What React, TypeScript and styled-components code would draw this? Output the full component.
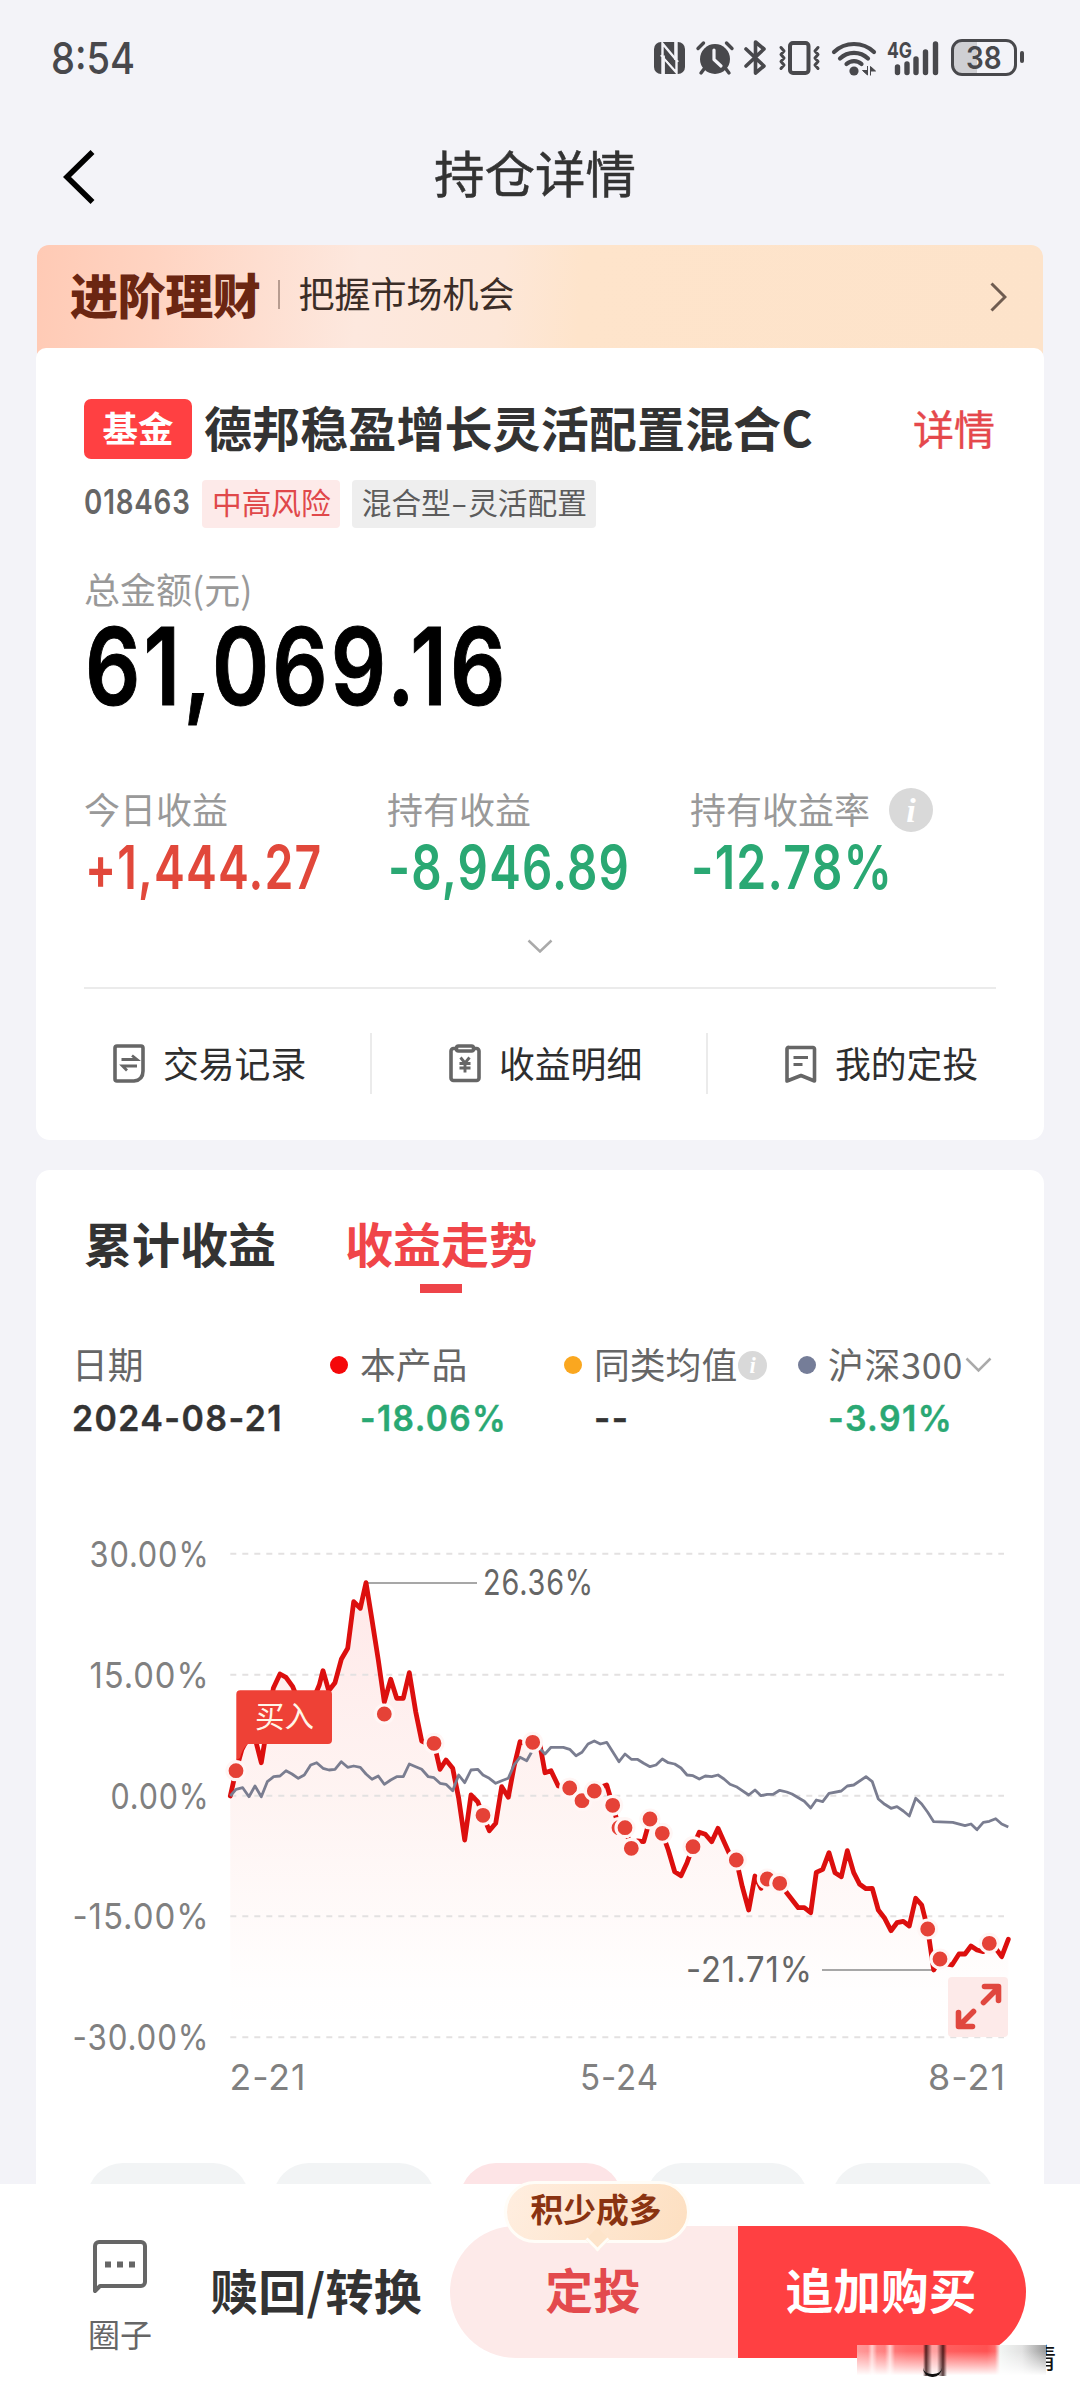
import React, { useLayoutEffect, useRef, useState } from "react";
import styled, { createGlobalStyle, css } from "styled-components";

const cjkFont = `"Noto Sans CJK SC", "Noto Sans", sans-serif`;
const numFont = `Inter, Roboto, "Noto Sans CJK SC", sans-serif`;

const Global = createGlobalStyle`
  * { box-sizing: border-box; }
  body { margin: 0; background: #f3f3f8; font-family: ${cjkFont}; }
`;

/* CJK glyphs sit low in their line box; this evens them out when centred. */
const centred = css`
  padding-bottom: 0.11em;
  white-space: nowrap;
`;

const Page = styled.div`
  width: 1080px;
  height: 2400px;
  overflow: hidden;
  display: flex;
  flex-direction: column;
  background: #f3f3f8;
`;

/* ---------- fitted numerals ---------- */
const FitBox = styled.span<{ $w: number }>`
  display: inline-block;
  flex: none;
  width: ${(p) => p.$w}px;
  white-space: nowrap;
  text-align: left;
`;
const FitInner = styled.span`
  display: inline-block;
  transform-origin: 0 50%;
`;
function Fit({ width, children }: { width: number; children: string }) {
  const ref = useRef<HTMLSpanElement>(null);
  const [k, setK] = useState(1);
  useLayoutEffect(() => {
    if (ref.current) setK(width / ref.current.offsetWidth);
  }, [width, children]);
  return (
    <FitBox $w={width}>
      <FitInner ref={ref} style={{ transform: `scaleX(${k})` }}>
        {children}
      </FitInner>
    </FitBox>
  );
}

/* ---------- status bar ---------- */
const StatusBar = styled.header`
  flex: none;
  height: 115px;
  padding: 0 56px 0 51px;
  display: flex;
  align-items: center;
  justify-content: space-between;
  color: #48484c;
`;
const Clock = styled.div`
  font: 500 44px/50px ${numFont};
`;
const StatusIcons = styled.div`
  display: flex;
  align-items: center;
`;
const StatusIcon = styled.svg<{ $gap?: number }>`
  display: block;
  overflow: visible;
  margin-left: ${(p) => p.$gap ?? 0}px;
`;
const Battery = styled.div`
  position: relative;
  margin: 0 7px 0 12px;
  width: 66px;
  height: 37px;
  border: 3px solid #48484c;
  border-radius: 11px;
  background: linear-gradient(90deg, #cfcfd3 0 38%, transparent 38%);
  font: 600 31px/31px ${numFont};
  text-align: center;
  &::after {
    content: "";
    position: absolute;
    right: -10px;
    top: 9px;
    width: 4px;
    height: 12px;
    border-radius: 2px;
    background: #48484c;
  }
`;

function StatusGlyphs() {
  const c = "#48484c";
  return (
    <StatusIcons>
      <StatusIcon width="31" height="32" viewBox="0 0 31 32">
        <rect width="31" height="32" rx="7" fill={c} />
        <path d="M8.500 32V1.500L24 20M22.500 0v30.500L7 13" fill="none" stroke="#f3f3f8" strokeWidth="2.400" />
        <path d="M9.700 13.500V32M21.400 0v18" stroke="#f3f3f8" strokeWidth="2.400" />
        <path d="M11 8l10 11v8L11 16z" fill={c} />
      </StatusIcon>
      <StatusIcon $gap={11} width="38" height="34" viewBox="0 0 38 34">
        <circle cx="19" cy="18" r="15" fill={c} />
        <path d="M2 7.500L7.500 2M36 7.500L30.500 2M8 28l-3 4M30 28l3 4" stroke={c} strokeWidth="3.400" strokeLinecap="round" />
        <path d="M18 9v9.500l7 6.500" fill="none" stroke="#f3f3f8" strokeWidth="3.200" strokeLinecap="round" strokeLinejoin="round" />
      </StatusIcon>
      <StatusIcon $gap={10} width="23" height="35" viewBox="0 0 23 35">
        <path d="M2 9l18 17-8.500 7V2L20 9 2 26" fill="none" stroke={c} strokeWidth="3.600" strokeLinejoin="round" strokeLinecap="round" />
      </StatusIcon>
      <StatusIcon $gap={11} width="43" height="34" viewBox="0 0 43 34">
        <rect x="12" y="2" width="18.500" height="30" rx="3" fill="none" stroke={c} strokeWidth="4" />
        <path d="M3 6.500l3 3.500-3 3.500 3 3.500-3 3.500 3 3.500-3 3.500M40 6.500l-3 3.500 3 3.500-3 3.500 3 3.500-3 3.500 3 3.500" fill="none" stroke={c} strokeWidth="3" strokeLinejoin="round" strokeLinecap="round" />
      </StatusIcon>
      <StatusIcon $gap={11} width="46" height="36" viewBox="0 0 46 36">
        <path d="M2 12a29 29 0 0 1 40 0M8 18.500a20 20 0 0 1 28 0M14.500 24a11 11 0 0 1 15 0" fill="none" stroke={c} strokeWidth="4.200" strokeLinecap="round" />
        <circle cx="22" cy="31" r="4.600" fill={c} />
        <path d="M35.500 26v9l-5-4.500h5M38.500 35.500v-9l5 4.500h-5" fill={c} stroke={c} />
      </StatusIcon>
      <StatusIcon $gap={9} width="52" height="36" viewBox="0 0 52 36">
        <text x="0" y="17.500" fontFamily={numFont} fontSize="22" fontWeight="700" fill={c} textLength="25" lengthAdjust="spacingAndGlyphs">4G</text>
        <path d="M10.500 27v5.500M20 24v8.500M29 19v13.500M38.500 12v20.500M48.500 4v28.500" stroke={c} strokeWidth="5.400" strokeLinecap="round" />
      </StatusIcon>
      <Battery>
        <Fit width={36}>38</Fit>
      </Battery>
    </StatusIcons>
  );
}

/* ---------- nav ---------- */
const Nav = styled.nav`
  flex: none;
  height: 115px;
  margin-bottom: 15px;
  padding: 0 63px;
  display: grid;
  grid-template-columns: 1fr auto 1fr;
  align-items: center;
`;
const BackIcon = styled.svg`
  margin-top: 8px;
`;
const NavTitle = styled.h1`
  margin: 0 10px 4px 0;
  font-size: 50.500px;
  font-weight: 400;
  -webkit-text-stroke: 0.5px #333;
  line-height: 60px;
  color: #333;
`;

/* ---------- banner ---------- */
const Banner = styled.section`
  flex: none;
  height: 119px;
  margin: 0 37px -16px;
  padding: 0 36px 24px 33px;
  border-radius: 12px 12px 0 0;
  display: flex;
  align-items: center;
  background: linear-gradient(95deg, #ffcab5 0%, #ffd4c2 12%, #fde8de 32%, #fde7d8 46%, #fee4cb 54%, #fde3ca 100%);
`;
const BannerName = styled.div`
  font-size: 48px;
  font-weight: 900;
  letter-spacing: -0.4px;
  line-height: 60px;
  color: #6b2612;
  white-space: nowrap;
`;
const BannerRule = styled.div`
  width: 2px;
  height: 29px;
  margin: 4px 18px 0 18px;
  background: #b79c90;
`;
const BannerText = styled.div`
  flex: 1;
  font-size: 36px;
  line-height: 50px;
  padding-bottom: 1px;
  color: #3b2d27;
`;
const BannerArrow = styled.svg`
  margin-top: 8px;
`;

/* ---------- cards ---------- */
const Card = styled.section<{ $h: number; $open?: boolean }>`
  flex: none;
  height: ${(p) => p.$h}px;
  margin: 0 36px ${(p) => (p.$open ? 0 : 30)}px;
  border-radius: ${(p) => (p.$open ? "14px 14px 0 0" : "10px 10px 14px 14px")};
  background: #fff;
  overflow: hidden;
`;
const HoldingBody = styled.div`
  padding: 51px 48px 0;
`;
const TitleRow = styled.div`
  height: 60px;
  display: flex;
  align-items: center;
`;
const TypeBadge = styled.span`
  flex: none;
  width: 108px;
  height: 60px;
  margin-right: 12px;
  border-radius: 7px;
  background: #ff4042;
  color: #fff;
  font-size: 35.500px;
  font-weight: 700;
  text-align: center;
  white-space: nowrap;
  line-height: 56px;
`;
const FundName = styled.h2`
  margin: 0;
  flex: 1;
  font-size: 48px;
  font-weight: 700;
  letter-spacing: 0.1px;
  line-height: 60px;
  color: #333;
  ${centred}
`;
const DetailLink = styled.a`
  font-size: 41px;
  line-height: 50px;
  margin-right: 1px;
  color: #e5484c;
  -webkit-text-stroke: 0.4px #e5484c;
  ${centred}
`;
const MetaRow = styled.div`
  height: 48px;
  margin-top: 21px;
  display: flex;
  align-items: center;
`;
const FundCode = styled.div`
  margin-right: 11px;
  padding-bottom: 4px;
  font: 600 34px/40px ${numFont};
  letter-spacing: 1px;
  color: #666;
`;
const Tag = styled.span<{ $risk?: boolean }>`
  height: 48px;
  margin-right: 12px;
  padding: 0 9px 0 10px;
  border-radius: 4px;
  font-size: 29.700px;
  line-height: 43px;
  white-space: nowrap;
  color: ${(p) => (p.$risk ? "#e0484a" : "#5c5c5c")};
  background: ${(p) => (p.$risk ? "#fdeae9" : "#eeeeee")};
`;
const Dash = styled.span`
  display: inline-block;
  margin: 0 3.500px;
  transform: scaleX(1.6);
`;
const Label = styled.div`
  display: flex;
  align-items: center;
  font-size: 36px;
  line-height: 40px;
  height: 40px;
  color: #999;
  white-space: nowrap;
`;
const TotalLabel = styled(Label)`
  margin-top: 40px;
`;
const TotalValue = styled.div`
  margin-top: 8px;
  padding-left: 1px;
  font: 600 107px/100px ${numFont};
  letter-spacing: 4px;
  -webkit-text-stroke: 1px #000;
  color: #000;
`;
const Stats = styled.div`
  margin-top: 72px;
  display: grid;
  grid-template-columns: 303px 303px 1fr;
`;
const StatValue = styled.div<{ $up?: boolean }>`
  margin-top: 14px;
  padding-left: 1px;
  font: 600 60px/50px ${numFont};
  letter-spacing: 1.500px;
  color: ${(p) => (p.$up ? "#e1483b" : "#2aa873")};
`;
const InfoDot = styled.i<{ $size: number; $gap: number }>`
  flex: none;
  width: ${(p) => p.$size}px;
  height: ${(p) => p.$size}px;
  margin: 4px 0 0 ${(p) => p.$gap}px;
  border-radius: 50%;
  background: #d9d9d9;
  color: #fff;
  font: italic 700 ${(p) => p.$size * 0.78}px / ${(p) => p.$size}px "Liberation Serif", serif;
  text-align: center;
`;
const Expander = styled.div`
  margin-top: 47px;
  height: 13px;
  display: flex;
  justify-content: center;
`;
const Divider = styled.div`
  height: 2px;
  margin-top: 35px;
  background: #ebebeb;
`;
const Actions = styled.div`
  height: 61px;
  margin: 44px -48px 0;
  display: grid;
  grid-template-columns: repeat(3, 336px);
`;
const Action = styled.div`
  padding-left: 77px;
  display: flex;
  align-items: center;
  gap: 18px;
  & + & {
    box-shadow: -2px 0 0 #ebebeb;
  }
`;
const ActionText = styled.span`
  font-size: 35.800px;
  line-height: 44px;
  color: #2e2e2e;
  ${centred}
`;

/* ---------- trend card ---------- */
const Tabs = styled.div`
  padding: 42px 0 0 48px;
  display: flex;
  gap: 69px;
`;
const Tab = styled.div<{ $on?: boolean }>`
  font-size: 48px;
  font-weight: 700;
  line-height: 60px;
  color: ${(p) => (p.$on ? "#f04549" : "#333")};
  &::after {
    content: "";
    display: block;
    width: 42px;
    height: 9px;
    margin: 12px auto 0;
    background: ${(p) => (p.$on ? "#ee4449" : "transparent")};
  }
`;
const Legend = styled.div`
  margin: 50px 0 0 36px;
  display: grid;
  grid-template-columns: 258px 234px 234px 1fr;
`;
const LegendName = styled.div<{ $dot?: string }>`
  height: 40px;
  display: flex;
  align-items: center;
  font-size: 35.800px;
  line-height: 40px;
  color: #666;
  white-space: nowrap;
  &::before {
    content: "";
    display: ${(p) => (p.$dot ? "block" : "none")};
    width: 18px;
    height: 18px;
    margin: 4px 12px 0 0;
    border-radius: 50%;
    background: ${(p) => p.$dot};
  }
`;
const IndexCount = styled.span`
  letter-spacing: 0.800px;
`;
const LegendValue = styled.div<{ $tone?: string; $indent?: boolean }>`
  margin-top: 15px;
  padding-left: ${(p) => (p.$indent ? 30 : 0)}px;
  font: 600 36px/40px ${numFont};
  letter-spacing: 1.500px;
  -webkit-text-stroke: 0.4px currentColor;
  color: ${(p) => p.$tone ?? "#333"};
`;
const LegendChevron = styled.svg`
  margin: 4px 0 0 2px;
`;
const ChartArt = styled.svg`
  display: block;
  margin-top: 62px;
`;
const Chips = styled.div`
  margin: 51px 0 0 51px;
  display: flex;
  gap: 24.300px;
`;
const Chip = styled.div<{ $on?: boolean }>`
  width: 162px;
  height: 72px;
  border-radius: 36px;
  background: ${(p) => (p.$on ? "#fde4e6" : "#f2f4f5")};
`;

const product =
  "194.3,296 200,270.7 205.7,250 212,238 219,238 225.3,262.7 229,240 237.3,188.3 244,174 250,177.3 256.7,186.7 262,200 277,200 283.3,185 287,170.7 292.7,190.7 299,182.7 305.3,159.3 311.7,148.3 317.7,101.7 324.3,108.3 330,82.7 336,120 342.3,160 348.3,202 354.7,179.3 360.7,198.3 367.3,198.3 373.3,172.7 379.7,211.7 385.7,241 392.3,244 398,243.3 404,269.3 410,260 416.7,268.3 422.7,298.3 428.7,340 435,295 441.7,301.7 447,315.3 453.3,330.7 459.7,323.3 465.7,286.7 472.3,297.3 478,266.7 484,241.7 490.7,244 496.7,242.3 504,245 509,272.7 515,270.7 522.3,286 533.7,288 540,296.7 546,300.7 552,293.3 558.3,291 564.3,287.3 570.7,285 576.7,305.3 583,327.7 589,327.7 595.3,348.3 601.3,341 607.7,341.7 614,319 620,321.7 626.3,333.3 632.3,350 638.7,371.7 645,375.7 651,362.7 657,346.7 663.3,332.3 669.3,334.3 675.7,341.7 682,328.3 688,341.7 694,355 700.3,360 706.3,386.7 712.7,410 719,376 725,388.3 731.3,379 737.3,380 743.7,383.3 750.7,392.7 762.3,407.7 768.3,407.7 774.7,412.7 780.3,372.3 786.7,369.3 793,352.7 799,372.7 805.3,376.7 811.3,350.7 817.7,372.7 823.7,384.3 830,388.7 836.3,388.3 842.3,410 848.7,418.3 855,430.7 861,422.7 867.3,421.3 873.3,426 879.7,398.3 885.7,405 891.7,429 897.7,470 904,459 910,464 916,465 923,454 929,454 935,446 941,450 947.3,451.7 953.3,443.3 959.7,448.3 965.7,456.7 972.3,439.3";
const index300 =
  "194.3,296 200,289.3 206.7,287.7 213,296.7 219,286 225.3,296.7 231.3,281.7 237.7,276.7 244,276 250,270.7 256,274 262.3,278.3 268.3,275 274.7,265 280.7,262.7 287,268.3 293,270 299,269.3 305.3,261.7 311.7,267.3 317.7,266 324.3,267.3 330,274 336,279.3 342.3,276 348.3,284.3 354.7,280 360.7,276.7 367.3,276.7 373.3,264 379.7,266.7 385.7,269.3 392.3,276.7 398,277.7 404,283.3 410,284.3 416.7,290.7 422.7,275 428.7,282.7 435,270 441.7,269.3 447,275 453.3,278.3 459.7,283.3 465.7,280.7 472.3,278.3 478,265 484,257.3 490.7,260.7 496.7,250 503.3,248 509,254 515,247.3 527.3,247.3 533.7,249.3 540,255.7 546,252.3 552,244 558.3,241 564.3,244 570.7,242.3 576.7,251.7 583,261.7 589,254 595.3,259.3 601.3,259.3 607.7,263.3 614,266.7 620,265 626.3,259 632.3,262.7 638.7,264 645,268 651,275 657,275.7 663.3,279 669.3,276 675.7,276.7 682,275 688,279 694,284.3 700.3,286.7 712.7,295 719,290 725,295.7 731.3,294.3 737.3,294.3 743.7,290.3 750.7,292 756,294 762.3,297.7 768.3,301.3 774.7,308 780.3,300 786.7,301.7 793,293.3 805.3,291 811.3,286 817.7,285 830,276.7 836.3,281.7 842.3,299 848.7,304.3 855,308.3 861,306.7 867.3,311 873.3,316 879.7,298.3 885.7,304 891.7,312.3 897.7,321.7 916.7,322.3 929,325.7 935,324 941,329.7 947.3,322.3 953.3,321.3 959.7,318.7 965.7,324 972.3,327";
const trades: [number, number][] = [
  [200, 270.7], [348.3, 214], [398, 243.3], [447, 315.3], [496.7, 242.3], [533.7, 288],
  [546, 300.7], [558.3, 291], [576.7, 305.3], [583, 327.7], [589, 327.7], [595.3, 348.3],
  [614, 319], [626.3, 333.3], [657, 346.7], [700.3, 360], [731.3, 379], [743.7, 383.3],
  [891.7, 429], [904, 459], [953.3, 443.3],
];
const axis: [string, number, number][] = [
  ["30.00%", 53.7, 120],
  ["15.00%", 174.7, 120],
  ["0.00%", 295.7, 99],
  ["-15.00%", 416.3, 137],
  ["-30.00%", 537.3, 137],
];

function Chart() {
  const num = { fontFamily: numFont, fontSize: 35.5, letterSpacing: 1 };
  return (
    <ChartArt width="1008" height="612" viewBox="0 0 1008 612">
      <defs>
        <linearGradient id="fade" x1="0" y1="80" x2="0" y2="537" gradientUnits="userSpaceOnUse">
          <stop offset="0" stopColor="#f00" stopOpacity="0.09" />
          <stop offset="0.5" stopColor="#f53a20" stopOpacity="0.055" />
          <stop offset="0.9" stopColor="#f53a20" stopOpacity="0.005" />
          <stop offset="1" stopColor="#f53a20" stopOpacity="0" />
        </linearGradient>
      </defs>
      <polygon points={`${product} 972.3,537 194.3,537`} fill="url(#fade)" />
      {axis.map(([label, y, w]) => (
        <g key={label}>
          <path d={`M194.3 ${y}H968`} stroke="#e3e1e1" strokeWidth="2" strokeDasharray="6 6" />
          <text {...num} x={173.5 - w} y={y + 13} textLength={w} lengthAdjust="spacingAndGlyphs" fill="#808080">
            {label}
          </text>
        </g>
      ))}
      <path d="M330 83H441M786 470H898" stroke="#8a8a8a" strokeWidth="1.5" />
      <polyline points={product} fill="none" stroke="#dc0f0e" strokeWidth="4.8" strokeLinejoin="round" strokeLinecap="round" />
      <polyline points={index300} fill="none" stroke="#7a7d90" strokeWidth="2.8" strokeLinejoin="round" />
      {trades.map(([x, y]) => (
        <circle key={`${x}-${y}`} cx={x} cy={y} r="9" fill="#e54237" stroke="#fff6f5" strokeWidth="3.2" />
      ))}
      <path d="M204 190.300H292a4 4 0 0 1 4 4V240a4 4 0 0 1-4 4H212q-6 5-8 14l-3.700 2V194.300a4 4 0 0 1 4-4z" fill="#ee4136" />
      <text x="219" y="227" fontFamily={cjkFont} fontSize="29.500" fill="#fff6e8">买入</text>
      <text {...num} x="447" y="95" textLength="111" lengthAdjust="spacingAndGlyphs" fill="#666">26.36%</text>
      <text {...num} x="650" y="482" textLength="127" lengthAdjust="spacingAndGlyphs" fill="#666">-21.71%</text>
      <rect x="912" y="477" width="60" height="60" rx="4" fill="#fdeae9" />
      <path d="M947.500 502.500L962 488M948.500 486.500H962.500V500.500M937.500 511.500L923 526M922.500 512.500V526.500H936.500" fill="none" stroke="#e0473f" strokeWidth="5.600" strokeLinecap="round" strokeLinejoin="round" />
      <text {...num} x="193.500" y="590" textLength="77" lengthAdjust="spacingAndGlyphs" fill="#808080">2-21</text>
      <text {...num} x="544" y="590" textLength="79" lengthAdjust="spacingAndGlyphs" fill="#808080">5-24</text>
      <text {...num} x="892" y="590" textLength="78" lengthAdjust="spacingAndGlyphs" fill="#808080">8-21</text>
    </ChartArt>
  );
}

/* ---------- bottom bar ---------- */
const BottomBar = styled.footer`
  position: relative;
  flex: none;
  height: 216px;
  padding: 42px 54px 0 70px;
  display: flex;
  align-items: flex-start;
  background: #fff;
`;
const Community = styled.div`
  width: 100px;
  padding-top: 14px;
  display: flex;
  flex-direction: column;
  align-items: center;
  gap: 21px;
  font-size: 32px;
  line-height: 36px;
  color: #666;
`;
const Redeem = styled.div`
  width: 280px;
  padding-left: 40px;
  font-size: 48px;
  font-weight: 700;
  letter-spacing: 0.300px;
  line-height: 127px;
  white-space: nowrap;
  color: #333;
`;
const Button = styled.div<{ $primary?: boolean }>`
  position: relative;
  width: 288px;
  height: 132px;
  border-radius: ${(p) => (p.$primary ? "0 66px 66px 0" : "66px 0 0 66px")};
  background: ${(p) => (p.$primary ? "#ff4042" : "#fdeae9")};
  color: ${(p) => (p.$primary ? "#fff" : "#e34a4d")};
  font-size: 47.700px;
  font-weight: 700;
  line-height: 126px;
  padding-right: 2px;
  text-align: center;
`;
const Bubble = styled.div`
  position: absolute;
  left: 54px;
  top: -45px;
  width: 186px;
  height: 62px;
  border: 3px solid #fffdf8;
  border-radius: 31px;
  background: linear-gradient(110deg, #ffeee0, #fddfc0);
  color: #8a3311;
  font-size: 32.800px;
  font-weight: 700;
  line-height: 48px;
  padding-right: 2px;
  &::after {
    content: "";
    position: absolute;
    left: 82px;
    bottom: -8px;
    width: 14px;
    height: 14px;
    transform: rotate(45deg);
    border: solid #fffdf8;
    border-width: 0 3px 3px 0;
    background: #fde4ca;
  }
`;
const Smear = styled.div`
  position: absolute;
  left: 857px;
  top: 161px;
  width: 189px;
  height: 31px;
  background:
    linear-gradient(90deg, transparent 11px, #fff9 15px, transparent 20px, transparent 28px, #fffa 33px, transparent 38px),
    linear-gradient(90deg, transparent 66px, #2a0a0acc 69px, #fff6 75px, #fff6 80px, #2a0a0acc 86px, transparent 90px),
    linear-gradient(180deg, transparent 20%, #fff 98%),
    linear-gradient(90deg, #ff9a9a 0, #ff6a6a 50px, #ff5252 130px, #ff6a6a 138px, #f2f5f3 143px, #e2e2e2 165px, #9a9a9a 189px);
`;
const SmearTail = styled.div`
  position: absolute;
  left: 1046px;
  top: 158px;
  width: 10px;
  height: 36px;
  overflow: hidden;
  display: flex;
  justify-content: flex-end;
  font-size: 28px;
  line-height: 31px;
  color: #111;
`;
const SmearHook = styled.div`
  position: absolute;
  left: 923px;
  top: 184px;
  width: 19px;
  height: 9px;
  border-bottom: 3px solid #111;
  border-radius: 0 0 9px 9px;
`;

export default function App() {
  const line = { fill: "none", stroke: "#666", strokeWidth: 3.6, strokeLinejoin: "round" as const };
  return (
    <Page>
      <Global />
      <StatusBar>
        <Clock>
          <Fit width={84}>8:54</Fit>
        </Clock>
        <StatusGlyphs />
      </StatusBar>
      <Nav>
        <BackIcon width="32" height="54" viewBox="0 0 32 54">
          <path d="M29.500 2L4 27l25.500 25" fill="none" stroke="#000" strokeWidth="5.600" />
        </BackIcon>
        <NavTitle>持仓详情</NavTitle>
      </Nav>
      <Banner>
        <BannerName>进阶理财</BannerName>
        <BannerRule />
        <BannerText>把握市场机会</BannerText>
        <BannerArrow width="17" height="30" viewBox="0 0 17 30">
          <path d="M1.500 1.500L15 15 1.500 28.500" fill="none" stroke="#6f5c50" strokeWidth="3" />
        </BannerArrow>
      </Banner>
      <Card $h={792}>
        <HoldingBody>
          <TitleRow>
            <TypeBadge>基金</TypeBadge>
            <FundName>德邦稳盈增长灵活配置混合C</FundName>
            <DetailLink>详情</DetailLink>
          </TitleRow>
          <MetaRow>
            <FundCode>
              <Fit width={107}>018463</Fit>
            </FundCode>
            <Tag $risk>中高风险</Tag>
            <Tag>
              混合型<Dash>-</Dash>灵活配置
            </Tag>
          </MetaRow>
          <TotalLabel>总金额(元)</TotalLabel>
          <TotalValue>
            <Fit width={424}>61,069.16</Fit>
          </TotalValue>
          <Stats>
            <div>
              <Label>今日收益</Label>
              <StatValue $up>
                <Fit width={237}>+1,444.27</Fit>
              </StatValue>
            </div>
            <div>
              <Label>持有收益</Label>
              <StatValue>
                <Fit width={242}>-8,946.89</Fit>
              </StatValue>
            </div>
            <div>
              <Label>
                持有收益率
                <InfoDot $size={44} $gap={19}>i</InfoDot>
              </Label>
              <StatValue>
                <Fit width={202}>-12.78%</Fit>
              </StatValue>
            </div>
          </Stats>
          <Expander>
            <svg width="26" height="14" viewBox="0 0 26 14">
              <path d="M1.500 1.500L13 12.500 24.500 1.500" fill="none" stroke="#aaa" strokeWidth="2.500" />
            </svg>
          </Expander>
          <Divider />
          <Actions>
            <Action>
              <svg width="32" height="39" viewBox="0 0 32 39">
                <path {...line} d="M4 2H28a2 2 0 0 1 2 2V27q0 9-9 10H4a2 2 0 0 1-2-2V4a2 2 0 0 1 2-2z" />
                <path d="M8.500 15.500H24L19 11.500M24 22H9.500L14 26.500" fill="none" stroke="#666" strokeWidth="2.800" />
              </svg>
              <ActionText>交易记录</ActionText>
            </Action>
            <Action>
              <svg width="32" height="39" viewBox="0 0 32 39">
                <rect {...line} x="2" y="4.500" width="28" height="32" rx="2.500" />
                <rect {...line} x="7.500" y="2" width="17" height="5" rx="2" fill="#fff" />
                <path d="M11.500 13.500L16 19l4.500-5.500M16 19v9.500M10.500 19.500h11M10.500 24h11" fill="none" stroke="#666" strokeWidth="2.900" />
              </svg>
              <ActionText>收益明细</ActionText>
            </Action>
            <Action>
              <svg width="32" height="39" viewBox="0 0 32 39">
                <path {...line} d="M4 3.500H28a1.500 1.500 0 0 1 1.500 1.500V37L16 31.500 2 37V5a1.500 1.500 0 0 1 2-1.500z" />
                <path d="M8.500 13.500H23M8.500 20.500H17.500" stroke="#666" strokeWidth="3" />
              </svg>
              <ActionText>我的定投</ActionText>
            </Action>
          </Actions>
        </HoldingBody>
      </Card>
      <Card $h={1014} $open>
        <Tabs>
          <Tab>累计收益</Tab>
          <Tab $on>收益走势</Tab>
        </Tabs>
        <Legend>
          <div>
            <LegendName>日期</LegendName>
            <LegendValue>
              <Fit width={211}>2024-08-21</Fit>
            </LegendValue>
          </div>
          <div>
            <LegendName $dot="#f5080a">本产品</LegendName>
            <LegendValue $indent $tone="#2aa873">
              <Fit width={147}>-18.06%</Fit>
            </LegendValue>
          </div>
          <div>
            <LegendName $dot="#faa71f">
              同类均值
              <InfoDot $size={29} $gap={1}>i</InfoDot>
            </LegendName>
            <LegendValue $indent>
              <Fit width={36}>--</Fit>
            </LegendValue>
          </div>
          <div>
            <LegendName $dot="#757d98">
              <IndexCount>沪深300</IndexCount>
              <LegendChevron width="27" height="16" viewBox="0 0 27 16">
                <path d="M1.500 1.500l12 12 12-12" fill="none" stroke="#aaa" strokeWidth="2.500" />
              </LegendChevron>
            </LegendName>
            <LegendValue $indent $tone="#2aa873">
              <Fit width={125}>-3.91%</Fit>
            </LegendValue>
          </div>
        </Legend>
        <Chart />
        <Chips>
          <Chip />
          <Chip />
          <Chip $on />
          <Chip />
          <Chip />
        </Chips>
      </Card>
      <BottomBar>
        <Community>
          <svg width="54" height="54" viewBox="0 0 54 54">
            <path d="M2 51V6a4 4 0 0 1 4-4H48a4 4 0 0 1 4 4V42a4 4 0 0 1-4 4H7z" fill="none" stroke="#666" strokeWidth="4" strokeLinejoin="round" />
            <path d="M12 21.500h6v6h-6zM24 21.500h6v6h-6zM36 21.500h6v6h-6z" fill="#666" />
          </svg>
          圈子
        </Community>
        <Redeem>赎回/转换</Redeem>
        <Button>
          定投
          <Bubble>积少成多</Bubble>
        </Button>
        <Button $primary>追加购买</Button>
        <Smear />
        <SmearHook />
        <SmearTail>情</SmearTail>
      </BottomBar>
    </Page>
  );
}
